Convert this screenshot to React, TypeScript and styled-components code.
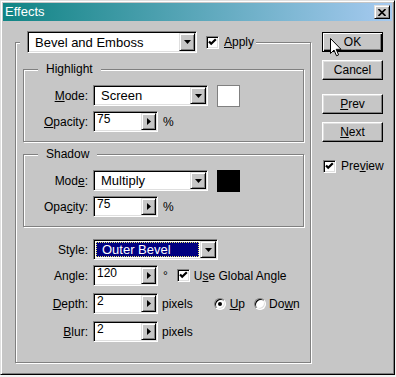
import React from 'react';
import styled, { createGlobalStyle } from 'styled-components';

const FACE = '#c6c6c6';

const Global = createGlobalStyle`
  html, body { margin: 0; padding: 0; background: #f4f4f4; }
  body {
    font-family: "Liberation Sans", Arial, sans-serif;
    font-size: 12px;
    color: #000;
  }
  #root { width: 396px; height: 377px; }
  * { box-sizing: border-box; }
`;

const Window = styled.div`
  width: 395px;
  height: 375px;
  background: ${FACE};
  border: 1px solid;
  border-color: #dfdfdf #000 #000 #dfdfdf;
  box-shadow: inset 1px 1px #fff, inset -1px -1px #808080;
  padding: 2px;
  display: flex;
  flex-direction: column;
`;

const TitleBar = styled.div`
  height: 18px;
  flex: none;
  background: linear-gradient(90deg, #108484 0%, #a6caf0 100%);
  display: flex;
  align-items: center;
  justify-content: space-between;
  padding: 0 2px 0 2px;
`;

const TitleText = styled.span`
  color: #fff;
  font-size: 13px;
  line-height: 18px;
`;

const raised = `
  border: 1px solid;
  border-color: #dfdfdf #000 #000 #dfdfdf;
  box-shadow: inset 1px 1px #fff, inset -1px -1px #808080;
  background: ${FACE};
`;

const sunken = `
  border: 1px solid;
  border-color: #808080 #fff #fff #808080;
  box-shadow: inset 1px 1px #000, inset -1px -1px #dfdfdf;
`;

const CloseButton = styled.div`
  ${raised}
  width: 16px;
  height: 14px;
  display: flex;
  align-items: center;
  justify-content: center;
`;

const Body = styled.div`
  display: flex;
  padding: 10px 0 0 12px;
`;

const Group = styled.fieldset<{ $width: number }>`
  margin: 0;
  padding: 0;
  min-width: 0;
  width: ${(p) => p.$width}px;
  border: 1px solid #808080;
  box-shadow: 1px 1px 0 #fff, inset 1px 1px 0 #fff;
`;

const MainLegend = styled.legend`
  display: flex;
  align-items: center;
  margin-left: 4px;
  padding: 0 2px 0 7px;
  background: ${FACE};
`;

const SubLegend = styled.legend`
  margin-left: 14px;
  padding: 0 8px;
  line-height: 14px;
  height: 14px;
  background: ${FACE};
`;

const MainContent = styled.div`
  display: flex;
  flex-direction: column;
  padding: 9px 6px 20px 7px;
`;

const SubContent = styled.div`
  display: flex;
  flex-direction: column;
  gap: 5px;
  padding: 9px 0 9px 0;
`;

const Spacer = styled.div<{ $h: number }>`
  height: ${(p) => p.$h}px;
  flex: none;
`;

const Row = styled.div`
  display: flex;
  align-items: center;
  height: 21px;
`;

const Label = styled.span<{ $w: number }>`
  width: ${(p) => p.$w}px;
  padding-right: 5px;
  text-align: right;
  white-space: nowrap;
`;

const Combo = styled.div<{ $w: number; $h?: number }>`
  ${sunken}
  width: ${(p) => p.$w}px;
  height: ${(p) => p.$h ?? 21}px;
  background: #fff;
  padding: 1px;
  display: flex;
  flex: none;
`;

const ComboText = styled.div<{ $selected?: boolean }>`
  flex: 1;
  display: flex;
  align-items: center;
  padding-left: 6px;
  font-size: 13px;
  white-space: nowrap;
  ${(p) =>
    p.$selected
      ? `background:#000080;color:#fff;border:1px dotted #e8e870;margin:1px;padding-left:5px;`
      : ''}
`;

const ArrowButton = styled.div<{ $w?: number }>`
  ${raised}
  width: ${(p) => p.$w ?? 16}px;
  flex: none;
  display: flex;
  align-items: center;
  justify-content: center;
`;

const Spin = styled.div`
  ${sunken}
  width: 65px;
  height: 21px;
  background: #fff;
  padding: 1px;
  display: flex;
  flex: none;
`;

const SpinValue = styled.div`
  flex: 1;
  padding: 0 0 0 2px;
  line-height: 13px;
`;

const Unit = styled.span<{ $ml?: number }>`
  margin-left: ${(p) => p.$ml ?? 5}px;
  white-space: nowrap;
`;

const Swatch = styled.div<{ $color: string }>`
  width: 23px;
  height: 22px;
  margin-left: 9px;
  background: ${(p) => p.$color};
  border: 1px solid ${(p) => (p.$color === '#000' ? '#000' : '#808080')};
`;

const CheckBox = styled.div<{ $ml?: number }>`
  ${sunken}
  width: 13px;
  height: 13px;
  flex: none;
  margin-left: ${(p) => p.$ml ?? 0}px;
  background: #fff;
  display: flex;
  align-items: center;
  justify-content: center;
`;

const CheckLabel = styled.span<{ $ml?: number }>`
  margin-left: ${(p) => p.$ml ?? 5}px;
  white-space: nowrap;
`;

const Radio = styled.div<{ $ml?: number }>`
  width: 12px;
  height: 12px;
  flex: none;
  border-radius: 50%;
  margin-left: ${(p) => p.$ml ?? 0}px;
  border: 1px solid;
  border-color: #808080 #fff #fff #808080;
  box-shadow: inset 1px 1px #000, inset -1px -1px #dfdfdf;
  background: #fff;
  display: flex;
  align-items: center;
  justify-content: center;
`;

const RadioDot = styled.div`
  width: 4px;
  height: 4px;
  border-radius: 50%;
  background: #000;
`;

const Side = styled.div`
  display: flex;
  flex-direction: column;
  margin-left: 11px;
  padding-top: 1px;
`;

const Button = styled.div<{ $default?: boolean; $mt?: number }>`
  position: relative;
  width: 61px;
  height: 20px;
  margin-top: ${(p) => p.$mt ?? 0}px;
  background: ${FACE};
  display: flex;
  align-items: center;
  justify-content: center;
  border: 1px solid;
  ${(p) =>
    p.$default
      ? `border-color:#000;box-shadow: inset 1px 1px #fff, inset -1px -1px #000, inset -2px -2px #808080;`
      : `border-color:#fff #000 #000 #fff;box-shadow: inset -1px -1px #808080, inset 1px 1px #dfdfdf;`}
`;

const Cursor = styled.svg`
  position: absolute;
  left: 7px;
  top: 5px;
`;

const PreviewRow = styled.div`
  display: flex;
  align-items: center;
  margin-top: 17px;
  margin-left: 1px;
`;

const Check = () => (
  <svg width="9" height="9" viewBox="0 0 9 9">
    <polyline points="1,3.5 3.2,5.8 7.8,1.2" fill="none" stroke="#000" strokeWidth="2.2" />
  </svg>
);

const Down = () => (
  <svg width="7" height="4" viewBox="0 0 7 4">
    <polygon points="0,0 7,0 3.5,4" fill="#000" />
  </svg>
);

const Right = () => (
  <svg width="4" height="7" viewBox="0 0 4 7">
    <polygon points="0,0 4,3.5 0,7" fill="#000" />
  </svg>
);

const SpinBox = ({ value }: { value: string }) => (
  <Spin>
    <SpinValue>{value}</SpinValue>
    <ArrowButton $w={15}>
      <Right />
    </ArrowButton>
  </Spin>
);

const ComboBox = ({ text, w, h, selected }: { text: string; w: number; h?: number; selected?: boolean }) => (
  <Combo $w={w} $h={h}>
    <ComboText $selected={selected}>{text}</ComboText>
    <ArrowButton>
      <Down />
    </ArrowButton>
  </Combo>
);

export default function App() {
  return (
    <>
      <Global />
      <Window>
        <TitleBar>
          <TitleText>Effects</TitleText>
          <CloseButton>
            <svg width="8" height="7" viewBox="0 0 8 7">
              <path d="M0.5 0 L7.5 7 M7.5 0 L0.5 7" stroke="#000" strokeWidth="1.6" />
            </svg>
          </CloseButton>
        </TitleBar>
        <Body>
          <Group $width={296}>
            <MainLegend>
              <ComboBox text="Bevel and Emboss" w={170} h={22} />
              <CheckBox $ml={9}>
                <Check />
              </CheckBox>
              <CheckLabel>
                <u>A</u>pply
              </CheckLabel>
            </MainLegend>
            <MainContent>
              <Group $width={281}>
                <SubLegend>Highlight</SubLegend>
                <SubContent>
                  <Row>
                    <Label $w={69}>
                      <u>M</u>ode:
                    </Label>
                    <ComboBox text="Screen" w={115} />
                    <Swatch $color="#fff" />
                  </Row>
                  <Row>
                    <Label $w={69}>
                      <u>O</u>pacity:
                    </Label>
                    <SpinBox value="75" />
                    <Unit>%</Unit>
                  </Row>
                </SubContent>
              </Group>
              <Spacer $h={5} />
              <Group $width={281}>
                <SubLegend>Shadow</SubLegend>
                <SubContent>
                  <Row>
                    <Label $w={69}>
                      Mod<u>e</u>:
                    </Label>
                    <ComboBox text="Multiply" w={115} />
                    <Swatch $color="#000" />
                  </Row>
                  <Row>
                    <Label $w={69}>
                      Opa<u>c</u>ity:
                    </Label>
                    <SpinBox value="75" />
                    <Unit>%</Unit>
                  </Row>
                </SubContent>
              </Group>
              <Spacer $h={12} />
              <Row>
                <Label $w={70}>Style:</Label>
                <ComboBox text="Outer Bevel" w={125} selected />
              </Row>
              <Spacer $h={5} />
              <Row>
                <Label $w={70}>Angle:</Label>
                <SpinBox value="120" />
                <Unit>°</Unit>
                <CheckBox $ml={9}>
                  <Check />
                </CheckBox>
                <CheckLabel $ml={4}>
                  U<u>s</u>e Global Angle
                </CheckLabel>
              </Row>
              <Spacer $h={7} />
              <Row>
                <Label $w={70}>
                  <u>D</u>epth:
                </Label>
                <SpinBox value="2" />
                <Unit $ml={4}>pixels</Unit>
                <Radio $ml={21}>
                  <RadioDot />
                </Radio>
                <CheckLabel $ml={4}>
                  <u>U</u>p
                </CheckLabel>
                <Radio $ml={9} />
                <CheckLabel $ml={3}>
                  Do<u>w</u>n
                </CheckLabel>
              </Row>
              <Spacer $h={7} />
              <Row>
                <Label $w={70}>
                  <u>B</u>lur:
                </Label>
                <SpinBox value="2" />
                <Unit $ml={4}>pixels</Unit>
              </Row>
            </MainContent>
          </Group>
          <Side>
            <Button $default>
              OK
              <Cursor width="12" height="19" viewBox="0 0 12 19">
                <path
                  d="M0.5 0.5 L0.5 15.5 L4 12 L6.5 17.8 L8.6 16.9 L6.2 11.3 L11 11.3 Z"
                  fill="#fff"
                  stroke="#000"
                  strokeWidth="1"
                />
              </Cursor>
            </Button>
            <Button $mt={8}>Cancel</Button>
            <Button $mt={14}>
              <span>
                <u>P</u>rev
              </span>
            </Button>
            <Button $mt={8}>
              <span>
                <u>N</u>ext
              </span>
            </Button>
            <PreviewRow>
              <CheckBox>
                <Check />
              </CheckBox>
              <CheckLabel>
                Pre<u>v</u>iew
              </CheckLabel>
            </PreviewRow>
          </Side>
        </Body>
      </Window>
    </>
  );
}
